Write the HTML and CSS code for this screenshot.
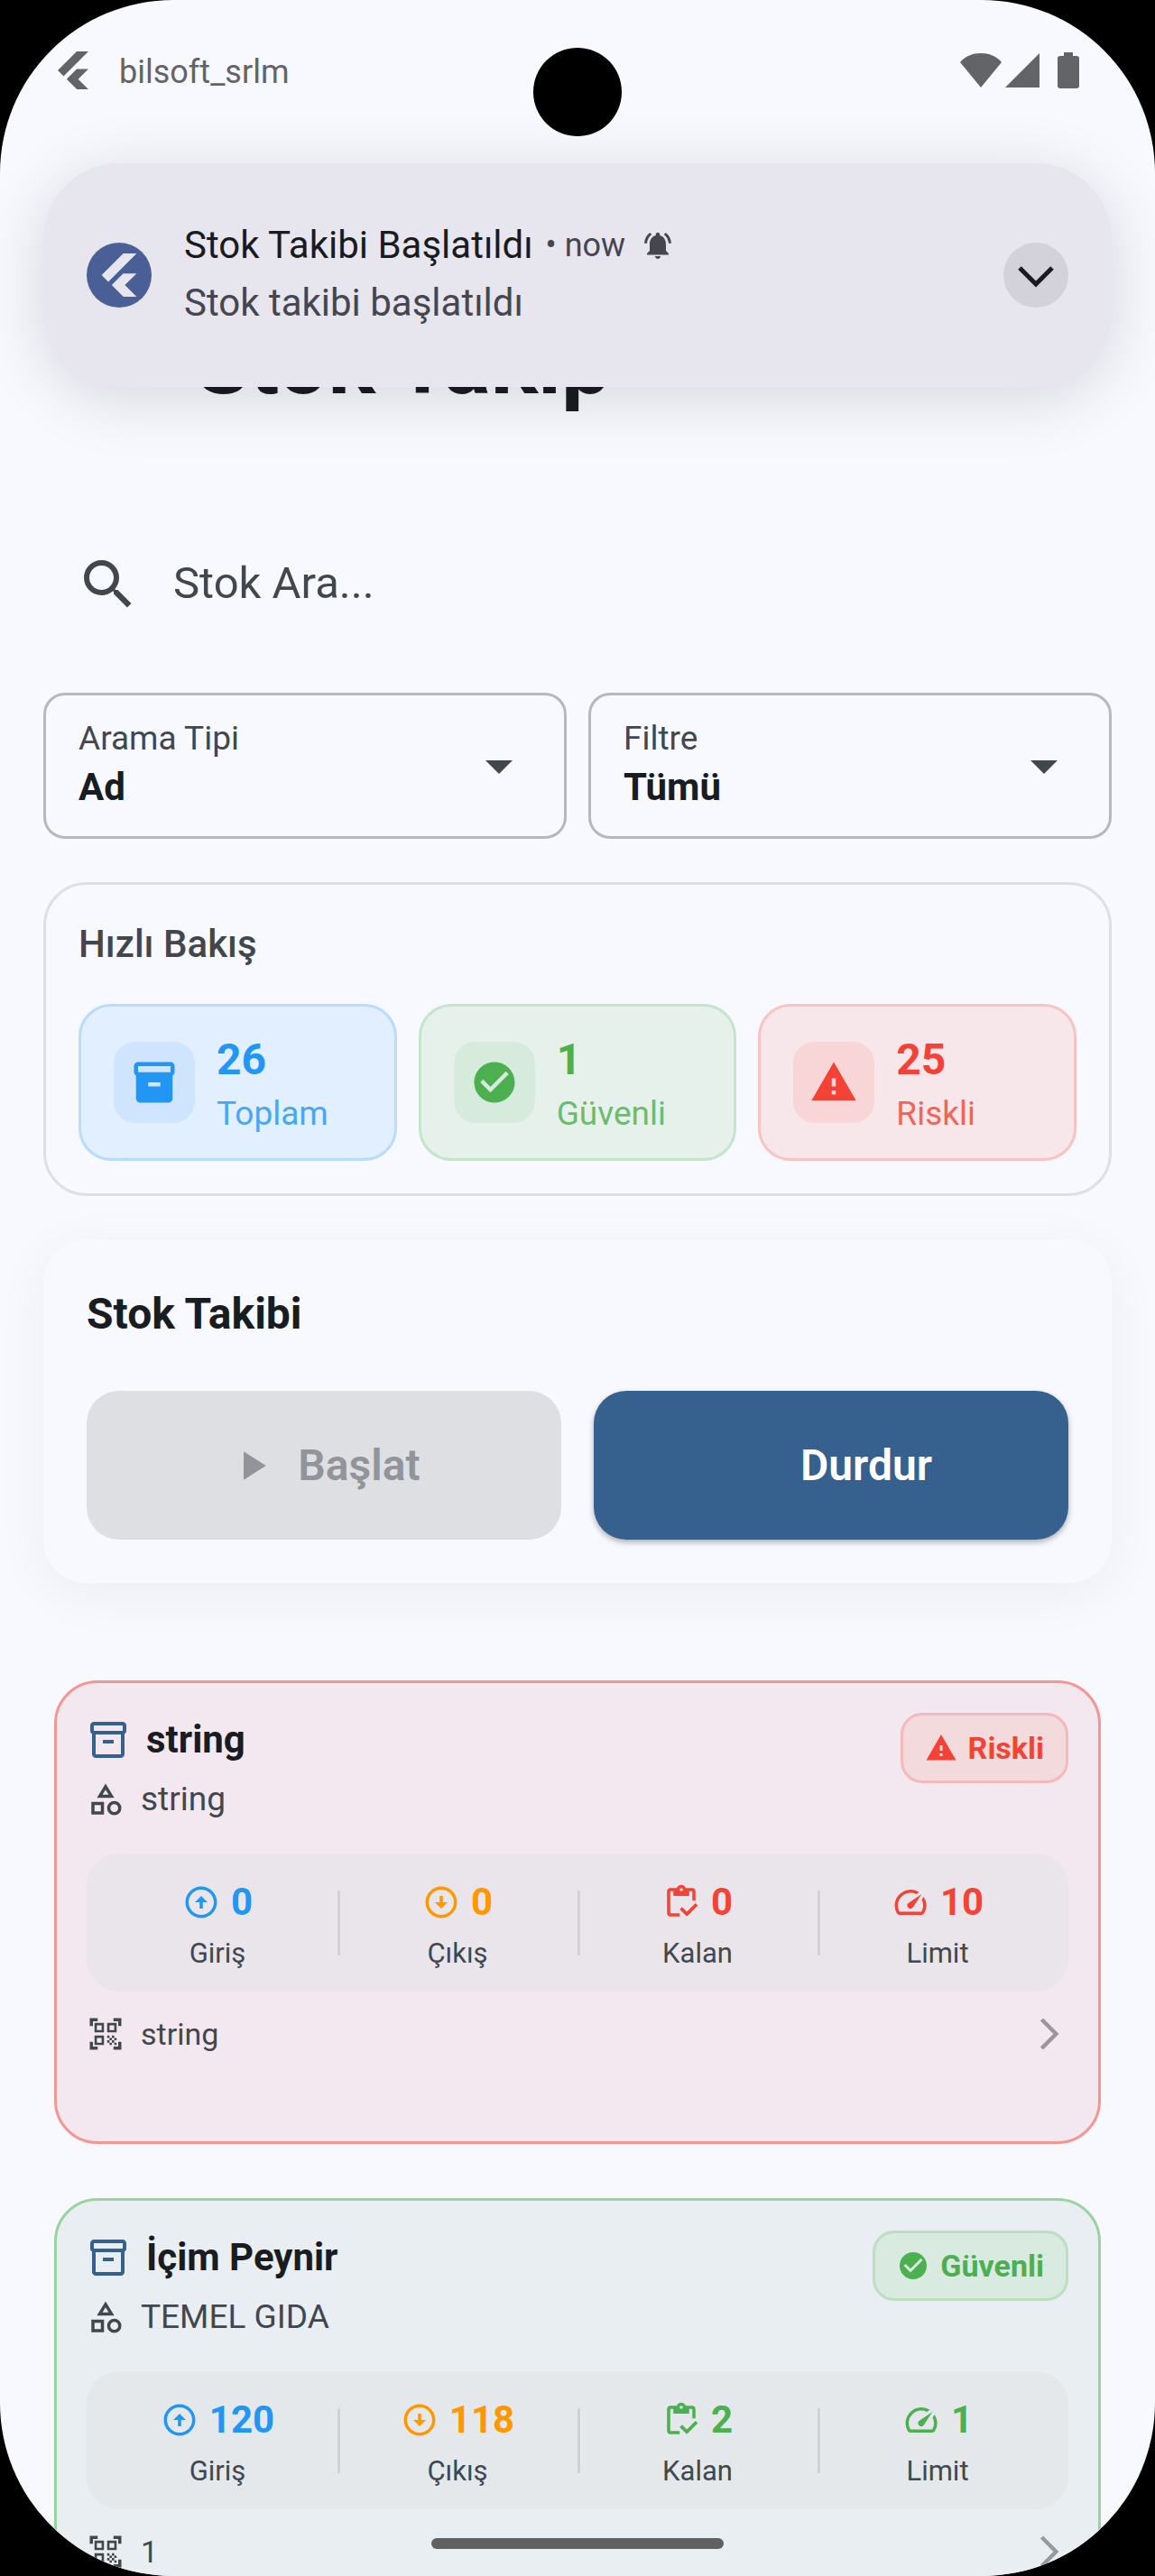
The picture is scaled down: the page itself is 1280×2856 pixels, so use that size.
FILE: index.html
```html
<!DOCTYPE html>
<html lang="tr">
<head>
<meta charset="utf-8">
<meta name="viewport" content="width=device-width, initial-scale=1">
<title>Stok Takip</title>
<link rel="stylesheet" href="styles.css">
</head>
<body>
<svg class="sprite" aria-hidden="true">
  <symbol id="flutter" viewBox="0 0 24 24"><path d="M14.3 0 2.3 12l3.7 3.7L21.7 0zM14.3 11.1 7.9 17.5l6.5 6.5h7.3l-6.5-6.5 6.5-6.4z"/></symbol>
  <symbol id="archive" viewBox="0 0 24 24"><path fill-rule="evenodd" d="M20 2H4c-1 0-2 .9-2 2v3.01c0 .72.43 1.34 1 1.69V20c0 1.100 1.100 2 2 2h14c.9 0 2-.9 2-2V8.700c.57-.35 1-.97 1-1.690V4c0-1.100-1-2-2-2zm-5 12H9v-2h6v2zM20 7H4V4h16v3z"/></symbol>
  <symbol id="archive-line" viewBox="0 0 24 24"><path fill-rule="evenodd" d="M20 2H4c-1 0-2 .9-2 2v3.010c0 .72.43 1.340 1 1.690V20c0 1.100 1.100 2 2 2h14c.9 0 2-.9 2-2V8.700c.57-.35 1-.97 1-1.690V4c0-1.100-1-2-2-2zm-1 18H5V9h14v11zm1-13H4V4h16v3zM9 12h6v2H9z"/></symbol>
  <symbol id="check" viewBox="0 0 24 24"><path d="M12 2C6.480 2 2 6.480 2 12s4.480 10 10 10 10-4.480 10-10S17.520 2 12 2zm-2 15-5-5 1.410-1.410L10 14.170l7.590-7.590L19 8l-9 9z"/></symbol>
  <symbol id="warning" viewBox="0 0 24 24"><path d="M1 21h22L12 2 1 21zm12-3h-2v-2h2v2zm0-4h-2v-4h2v4z"/></symbol>
  <symbol id="category" viewBox="0 0 24 24"><path fill-rule="evenodd" d="m12 2-5.500 9h11L12 2zm0 3.840L13.930 9h-3.870L12 5.840zM17.500 13a4.500 4.500 0 1 0 0 9 4.500 4.500 0 0 0 0-9zm0 7a2.500 2.500 0 1 1 0-5 2.500 2.500 0 0 1 0 5zM3 21.500h8v-8H3v8zm2-6h4v4H5v-4z"/></symbol>
  <symbol id="up" viewBox="0 0 24 24"><path d="M12 20c-4.410 0-8-3.590-8-8s3.590-8 8-8 8 3.590 8 8-3.590 8-8 8m0 2c5.520 0 10-4.480 10-10S17.520 2 12 2 2 6.480 2 12s4.480 10 10 10zm-1-10v4h2v-4h3l-4-4-4 4h3z"/></symbol>
  <symbol id="down" viewBox="0 0 24 24"><path d="M12 4c4.410 0 8 3.590 8 8s-3.590 8-8 8-8-3.590-8-8 3.590-8 8-8m0-2C6.480 2 2 6.480 2 12s4.480 10 10 10 10-4.480 10-10S17.520 2 12 2zm1 10V8h-2v4H8l4 4 4-4h-3z"/></symbol>
  <symbol id="inventory" viewBox="0 0 24 24"><path d="M5 5h2v3h10V5h2v6h2V5c0-1.100-.9-2-2-2h-4.180C14.400 1.840 13.300 1 12 1s-2.400.84-2.820 2H5c-1.100 0-2 .9-2 2v14c0 1.100.9 2 2 2h6v-2H5V5zm7-2c.55 0 1 .45 1 1s-.45 1-1 1-1-.45-1-1 .45-1 1-1z"/><path d="M21 12.500 15.510 18l-3.010-3-1.500 1.500 4.510 4.500 6.990-7z"/></symbol>
  <symbol id="speed" viewBox="0 0 24 24"><path d="m20.380 8.570-1.230 1.850a8 8 0 0 1-.22 7.580H5.070A8 8 0 0 1 15.580 6.850l1.850-1.230A10 10 0 0 0 3.350 19a2 2 0 0 0 1.720 1h13.850a2 2 0 0 0 1.740-1 10 10 0 0 0-.27-10.440zm-9.790 6.840a2 2 0 0 0 2.830 0l5.660-8.490-8.490 5.660a2 2 0 0 0 0 2.830z"/></symbol>
  <symbol id="qr" viewBox="0 0 24 24"><path fill-rule="evenodd" d="M9.500 6.500v3h-3v-3h3M11 5H5v6h6V5zm-1.500 9.500v3h-3v-3h3M11 13H5v6h6v-6zm6.500-6.500v3h-3v-3h3M19 5h-6v6h6V5zm-6 8h1.500v1.500H13V13zm1.500 1.500H16V16h-1.500v-1.500zM16 13h1.500v1.500H16V13zm-3 3h1.500v1.500H13V16zm1.500 1.500H16V19h-1.500v-1.500zM16 16h1.500v1.500H16V16zm1.500-1.500H19V16h-1.500v-1.500zm0 3H19V19h-1.500v-1.500zM22 7h-2V4h-3V2h5v5zm0 15v-5h-2v3h-3v2h5zM2 22h5v-2H4v-3H2v5zM2 2v5h2V4h3V2H2z"/></symbol>
  <symbol id="forward" viewBox="0 0 24 24"><path d="M6.230 20.230 8 22l10-10L8 2 6.230 3.770 14.460 12z"/></symbol>
</svg>

<div class="screen">
  <header class="status">
    <svg class="ic42"><use href="#flutter"/></svg>
    <span class="status-app">bilsoft_srlm</span>
    <span class="status-icons">
      <svg width="46" height="38" viewBox="0 0 46 38"><path d="M23 38 0 10C6 3 14 0 23 0s17 3 23 10z"/></svg>
      <svg width="38" height="38" viewBox="0 0 38 38"><path d="M38 0v38H0z"/></svg>
      <svg class="battery" width="24" height="40" viewBox="0 0 24 40"><path d="M7 0h10v4h4a3 3 0 0 1 3 3v30a3 3 0 0 1-3 3H3a3 3 0 0 1-3-3V7a3 3 0 0 1 3-3h4z"/></svg>
    </span>
  </header>
  <div class="camera"></div>

  <section class="notice" aria-label="Bildirim">
    <span class="notice-logo"><svg class="ic48"><use href="#flutter"/></svg></span>
    <div class="notice-text">
      <p class="notice-title">Stok Takibi Başlatıldı <span class="notice-time">• now</span>
        <svg class="bell" viewBox="0 0 24 24"><path d="M12 22c1.100 0 2-.9 2-2h-4c0 1.100.9 2 2 2zm6-6v-5c0-3.070-1.640-5.640-4.500-6.320V4c0-.83-.67-1.500-1.500-1.500s-1.500.67-1.500 1.500v.68C7.630 5.360 6 7.920 6 11v5l-2 2v1h16v-1l-2-2zM7.580 4.080 6.150 2.650C3.750 4.480 2.170 7.300 2.030 10.500h2c.15-2.650 1.510-4.970 3.550-6.420zm12.390 6.420h2c-.15-3.200-1.730-6.020-4.120-7.850l-1.420 1.430c2.020 1.450 3.390 3.770 3.540 6.420z"/></svg>
      </p>
      <p class="notice-body">Stok takibi başlatıldı</p>
    </div>
    <button class="expand" type="button" aria-label="Genişlet"><svg width="42" height="26" viewBox="0 0 42 26"><path class="stroke" d="m3 3 18 18L39 3"/></svg></button>
  </section>

  <h1 class="title">Stok Takip</h1>

  <main class="content">
    <label class="search">
      <svg class="ic72" viewBox="0 0 24 24"><path d="M15.500 14h-.79l-.28-.27A6.471 6.471 0 0 0 16 9.500 6.500 6.500 0 1 0 9.500 16c1.610 0 3.090-.59 4.230-1.570l.27.28v.79l5 4.990L20.490 19l-4.990-5zm-6 0C7.010 14 5 11.990 5 9.500S7.010 5 9.500 5 14 7.010 14 9.500 11.990 14 9.500 14z"/></svg>
      <input type="text" placeholder="Stok Ara..." aria-label="Stok Ara">
    </label>

    <div class="filters">
      <div class="field">
        <label for="type">Arama Tipi</label>
        <select id="type"><option>Ad</option></select>
        <svg class="ic72" viewBox="0 0 24 24"><path d="m7 10 5 5 5-5z"/></svg>
      </div>
      <div class="field">
        <label for="filter">Filtre</label>
        <select id="filter"><option>Tümü</option></select>
        <svg class="ic72" viewBox="0 0 24 24"><path d="m7 10 5 5 5-5z"/></svg>
      </div>
    </div>

    <section class="overview">
      <h2>Hızlı Bakış</h2>
      <div class="tiles">
        <div class="tile blue"><span class="tile-icon"><svg class="ic54"><use href="#archive"/></svg></span><p><strong>26</strong><span>Toplam</span></p></div>
        <div class="tile green"><span class="tile-icon"><svg class="ic54"><use href="#check"/></svg></span><p><strong>1</strong><span>Güvenli</span></p></div>
        <div class="tile red"><span class="tile-icon"><svg class="ic54"><use href="#warning"/></svg></span><p><strong>25</strong><span>Riskli</span></p></div>
      </div>
    </section>

    <section class="tracking">
      <h2>Stok Takibi</h2>
      <div class="actions">
        <button type="button" disabled><svg class="ic54" viewBox="0 0 24 24"><path d="M8 5v14l11-7z"/></svg>Başlat</button>
        <button type="button" class="primary"><svg class="ic54" viewBox="0 0 24 24"><path d="M6 6h12v12H6z"/></svg>Durdur</button>
      </div>
    </section>

    <div class="list">
      <article class="item risky">
        <div class="item-head">
          <div>
            <h3><svg class="ic48"><use href="#archive-line"/></svg>string</h3>
            <p class="group"><svg class="ic42"><use href="#category"/></svg>string</p>
          </div>
          <span class="badge"><svg class="ic36"><use href="#warning"/></svg>Riskli</span>
        </div>
        <div class="stats">
          <div class="stat in"><strong><svg class="ic42"><use href="#up"/></svg>0</strong><span>Giriş</span></div>
          <div class="stat out"><strong><svg class="ic42"><use href="#down"/></svg>0</strong><span>Çıkış</span></div>
          <div class="stat"><strong><svg class="ic42"><use href="#inventory"/></svg>0</strong><span>Kalan</span></div>
          <div class="stat"><strong><svg class="ic42"><use href="#speed"/></svg>10</strong><span>Limit</span></div>
        </div>
        <div class="item-foot"><svg class="ic42"><use href="#qr"/></svg><span>string</span><svg class="ic42 go"><use href="#forward"/></svg></div>
      </article>

      <article class="item safe">
        <div class="item-head">
          <div>
            <h3><svg class="ic48"><use href="#archive-line"/></svg>İçim Peynir</h3>
            <p class="group"><svg class="ic42"><use href="#category"/></svg>TEMEL GIDA</p>
          </div>
          <span class="badge"><svg class="ic36"><use href="#check"/></svg>Güvenli</span>
        </div>
        <div class="stats">
          <div class="stat in"><strong><svg class="ic42"><use href="#up"/></svg>120</strong><span>Giriş</span></div>
          <div class="stat out"><strong><svg class="ic42"><use href="#down"/></svg>118</strong><span>Çıkış</span></div>
          <div class="stat"><strong><svg class="ic42"><use href="#inventory"/></svg>2</strong><span>Kalan</span></div>
          <div class="stat"><strong><svg class="ic42"><use href="#speed"/></svg>1</strong><span>Limit</span></div>
        </div>
        <div class="item-foot"><svg class="ic42"><use href="#qr"/></svg><span>1</span><svg class="ic42 go"><use href="#forward"/></svg></div>
      </article>
    </div>
  </main>
  <div class="home-bar"></div>
</div>
</body>
</html>
```
FILE: styles.css
```css
* { box-sizing: border-box; }
body, h1, h2, h3, p { margin: 0; }
body {
  background: #000;
  color: #191c20;
  font-family: Roboto, "Liberation Sans", sans-serif;
  font-size: 37px;
}
svg { fill: currentColor; flex: none; display: block; }
button, input, select { font: inherit; color: inherit; border: 0; padding: 0; background: none; }
.sprite { position: absolute; width: 0; height: 0; }
.ic36 { width: 36px; height: 36px; }
.ic42 { width: 42px; height: 42px; }
.ic48 { width: 48px; height: 48px; }
.ic54 { width: 54px; height: 54px; }
.ic72 { width: 72px; height: 72px; }

.screen {
  position: relative;
  height: 100vh;
  overflow: hidden;
  background: #f8f9fe;
  border-radius: 192px;
}

/* system bar */
.status {
  display: flex;
  align-items: center;
  height: 156px;
  padding: 0 84px 0 60px;
  color: #636467;
}
.status-app { margin-left: 30px; padding-top: 4px; font-size: 36px; }
.status-icons { display: flex; align-items: center; gap: 4px; margin-left: auto; }
.battery { margin-left: 16px; }
.camera {
  position: absolute;
  top: 53px;
  left: 50%;
  width: 98px;
  height: 98px;
  margin-left: -49px;
  border-radius: 50%;
  background: #000;
}

/* heads-up notification, floats over the page */
.notice {
  position: absolute;
  z-index: 1;
  top: 181px;
  left: 48px;
  right: 48px;
  display: flex;
  align-items: center;
  height: 248px;
  padding: 0 48px;
  border-radius: 84px;
  background: #e7e5ee;
  box-shadow: 0 12px 72px rgba(0, 0, 0, .14);
}
.notice-logo, .expand {
  display: flex;
  align-items: center;
  justify-content: center;
  width: 72px;
  height: 72px;
  border-radius: 50%;
}
.notice-logo { background: #4a5f95; color: #e7e5ee; }
.notice-text { margin-left: 36px; padding-bottom: 4px; font-size: 42px; line-height: 63px; color: #45464f; }
.notice-title { display: flex; align-items: center; color: #1a1b21; }
.notice-time { margin-left: 14px; padding-top: 2px; font-size: 36px; color: #45464f; }
.bell { width: 36px; height: 36px; margin-left: 18px; color: #45464f; }
.expand { margin-left: auto; background: #d3d1da; color: #1a1b21; }
.expand svg { margin-top: 4px; }
.stroke { fill: none; stroke: currentColor; stroke-width: 5; }

.title {
  padding: 190px 48px 0 216px;
  font-size: 98px;
  line-height: 114px;
  font-weight: 700;
}
.content { padding: 116px 48px 0; }

.search {
  display: flex;
  align-items: center;
  gap: 36px;
  height: 144px;
  padding: 0 36px;
  color: #42474e;
}
.search input { flex: 1; min-width: 0; padding-bottom: 4px; font-size: 49px; outline: 0; }
.search input::placeholder { color: #42474e; opacity: 1; }

.filters { display: grid; grid-template-columns: 1fr 1fr; gap: 24px; margin-top: 48px; }
.field {
  display: grid;
  grid-template-columns: 1fr 72px;
  align-items: center;
  padding: 24px 36px;
  border: 3px solid #b6b8bf;
  border-radius: 24px;
  color: #42474e;
}
.field label { line-height: 48px; }
.field select {
  grid-row: 2;
  appearance: none;
  font-size: 42px;
  line-height: 60px;
  font-weight: 700;
  color: #191c20;
}
.field svg { grid-column: 2; grid-row: 1 / 3; }

.overview {
  margin-top: 48px;
  padding: 36px;
  border: 3px solid #dddfe4;
  border-radius: 48px;
}
.overview h2 { font-size: 42px; line-height: 60px; font-weight: 500; color: #42474e; }
.tiles { display: grid; grid-template-columns: repeat(3, 1fr); gap: 24px; margin-top: 36px; }
.tile {
  display: flex;
  align-items: center;
  gap: 24px;
  height: 174px;
  padding: 0 36px;
  border: 3px solid;
  border-radius: 36px;
}
.tile-icon { padding: 18px; border-radius: 24px; }
.tile p { padding-top: 6px; }
.tile strong, .tile p span { display: block; }
.tile strong { margin-bottom: 8px; font-size: 48px; line-height: 56px; font-weight: 700; }
.tile p span { line-height: 48px; opacity: .8; }
.blue { background: #e1efff; border-color: #b7dcfd; color: #2196f3; }
.blue .tile-icon { background: #cee5fd; }
.green { background: #e7f1ec; border-color: #c5e5cb; color: #4caf50; }
.green .tile-icon { background: #d6ebdc; }
.red { background: #f7e7ea; border-color: #f8c3c3; color: #f44336; }
.red .tile-icon { background: #f8d6d8; }

.tracking {
  margin-top: 48px;
  padding: 48px;
  border-radius: 48px;
  background: #f8f9fe;
  box-shadow: 0 12px 60px rgba(0, 0, 0, .05);
}
.tracking h2 { font-size: 48px; line-height: 70px; font-weight: 700; }
.actions { display: grid; grid-template-columns: 1fr 1fr; gap: 36px; margin-top: 50px; }
.actions button {
  display: flex;
  align-items: center;
  justify-content: center;
  gap: 24px;
  height: 165px;
  border-radius: 36px;
  background: #dddfe3;
  color: #929499;
  font-size: 48px;
  font-weight: 600;
}
.actions .primary { background: #36618e; color: #fff; box-shadow: 0 3px 6px rgba(0, 0, 0, .3); }
.primary svg { color: #36618e; }

.list { display: grid; gap: 60px; padding: 0 12px; margin-top: 108px; }
.item {
  min-height: 514px;
  padding: 33px;
  border: 3px solid;
  border-radius: 48px;
  color: #42474e;
}
.item-head { display: flex; justify-content: space-between; align-items: flex-start; }
.item h3, .group { display: flex; align-items: center; gap: 18px; }
.item h3 { font-size: 42px; line-height: 60px; font-weight: 700; color: #191c20; }
.item h3 svg { color: #36618e; }
.group { margin-top: 12px; line-height: 48px; }
.badge {
  display: flex;
  align-items: center;
  gap: 12px;
  height: 78px;
  padding: 0 24px;
  border: 3px solid;
  border-radius: 24px;
  font-size: 34px;
  font-weight: 700;
}
.stats { display: flex; align-items: center; margin-top: 36px; padding: 0 12px; border-radius: 36px; }
.stat { flex: 1; padding: 30px 0 21px; text-align: center; font-size: 31px; }
.stat strong {
  display: flex;
  align-items: center;
  justify-content: center;
  gap: 12px;
  margin-bottom: 12px;
  font-size: 42px;
  line-height: 48px;
  font-weight: 700;
}
.stat span { display: block; line-height: 42px; }
.stat + .stat { background: linear-gradient(#00000018, #00000018) left center / 3px 72px no-repeat; }
.item-foot { display: flex; align-items: center; gap: 18px; margin-top: 26px; font-size: 34px; line-height: 42px; }
.go { margin-left: auto; opacity: .5; }

.risky { background: #f3e8f0; border-color: #f49691; }
.risky .badge { background: #f2dadd; border-color: #f4b9ba; }
.risky .stats { background: #eae5eb; }
.risky .badge, .risky strong { color: #f44336; }
.safe { background: #e9eef2; border-color: #9bd3a0; }
.safe .badge { background: #d9eae0; border-color: #bcdfc2; }
.safe .stats { background: #e4e8eb; }
.safe .badge, .safe strong { color: #4caf50; }
.item .in strong { color: #2196f3; }
.item .out strong { color: #ff9800; }

.home-bar {
  position: absolute;
  bottom: 30px;
  left: 50%;
  width: 324px;
  height: 12px;
  margin-left: -162px;
  border-radius: 6px;
  background: #5f6160;
}
```
